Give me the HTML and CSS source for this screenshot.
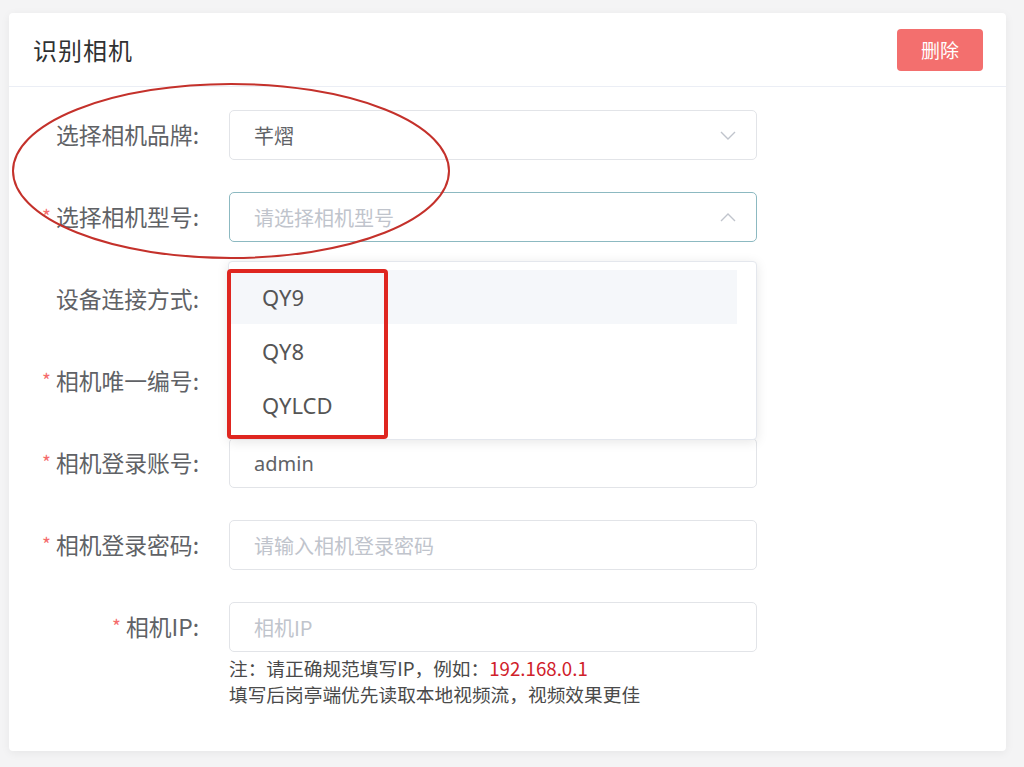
FILE: index.html
```html
<!DOCTYPE html>
<html lang="zh-CN">
<head>
<meta charset="utf-8">
<title>识别相机</title>
<link rel="stylesheet" href="styles.css">
</head>
<body>
<div class="page">
  <div class="card">
    <div class="card-header">
      <div class="title">识别相机</div>
      <button class="btn-danger">删除</button>
    </div>
    <div class="form">
      <div class="row">
        <label class="label">选择相机品牌:</label>
        <div class="input select"><span class="value">芊熠</span>
          <svg class="chev" viewBox="0 0 16 9" width="16" height="9"><path d="M1 1 L8 8 L15 1" fill="none" stroke="#c0c4cc" stroke-width="1.4"/></svg>
        </div>
      </div>
      <div class="row">
        <label class="label"><span class="req">*</span>选择相机型号:</label>
        <div class="input select focus"><span class="ph">请选择相机型号</span>
          <svg class="chev" viewBox="0 0 16 9" width="16" height="9"><path d="M1 8 L8 1 L15 8" fill="none" stroke="#c0c4cc" stroke-width="1.4"/></svg>
        </div>
      </div>
      <div class="row">
        <label class="label">设备连接方式:</label>
        <div class="input"></div>
      </div>
      <div class="row">
        <label class="label"><span class="req">*</span>相机唯一编号:</label>
        <div class="input"></div>
      </div>
      <div class="row">
        <label class="label"><span class="req">*</span>相机登录账号:</label>
        <div class="input"><span class="value">admin</span></div>
      </div>
      <div class="row">
        <label class="label"><span class="req">*</span>相机登录密码:</label>
        <div class="input"><span class="ph">请输入相机登录密码</span></div>
      </div>
      <div class="row">
        <label class="label"><span class="req">*</span>相机IP:</label>
        <div class="field">
          <div class="input"><span class="ph">相机IP</span></div>
          <div class="note">
            <div>注：请正确规范填写IP，例如：<span class="ip">192.168.0.1</span></div>
            <div>填写后岗亭端优先读取本地视频流，视频效果更佳</div>
          </div>
        </div>
      </div>
    </div>

    <div class="dropdown">
      <div class="opt hover">QY9</div>
      <div class="opt">QY8</div>
      <div class="opt">QYLCD</div>
    </div>

    <div class="mark-box"></div>
    <svg class="mark-ellipse" width="460" height="190" viewBox="0 0 460 190">
      <ellipse cx="222" cy="93" rx="218" ry="87" fill="none" stroke="#c4312b" stroke-width="2"/>
    </svg>
  </div>
</div>
</body>
</html>
```

FILE: styles.css
```css
html, body {
  margin: 0;
  padding: 0;
}
body {
  background: #f4f4f5;
  font-family: "Noto Sans", "Noto Sans CJK SC", sans-serif;
  color: #606266;
}
.page {
  padding: 13px 18px 16px 9px;
}
.card {
  position: relative;
  background: #fff;
  border-radius: 4px;
  box-shadow: 0 2px 10px rgba(0, 0, 0, 0.06);
  height: 738px;
}
.card-header {
  height: 73px;
  border-bottom: 1px solid #ebeef5;
  display: flex;
  align-items: center;
  justify-content: space-between;
  padding: 0 23px 0 24px;
}
.title {
  font-size: 24px;
  color: #303133;
  letter-spacing: 1px;
}
.btn-danger {
  width: 86px;
  height: 42px;
  border: none;
  border-radius: 4px;
  background: #f36f6e;
  color: #fff;
  font-family: inherit;
  font-size: 19px;
  padding: 0;
}
.form {
  padding-top: 23px;
  display: flex;
  flex-direction: column;
  gap: 32px;
}
.row {
  display: flex;
  align-items: flex-start;
}
.label {
  width: 190px;
  height: 50px;
  line-height: 50px;
  text-align: right;
  font-family: "Noto Sans CJK SC", sans-serif;
  font-size: 22.8px;
  color: #606266;
  margin-right: 30px;
  white-space: nowrap;
}
.req {
  color: #f56c6c;
  font-size: 19px;
  margin-right: 5px;
  position: relative;
  top: -2px;
}
.field {
  display: flex;
  flex-direction: column;
}
.input {
  box-sizing: border-box;
  width: 528px;
  height: 50px;
  border: 1px solid #e2e4e8;
  border-radius: 5px;
  padding-left: 24px;
  display: flex;
  align-items: center;
  font-size: 20px;
  background: #fff;
}
.select {
  position: relative;
}
.select .chev {
  position: absolute;
  right: 20px;
  top: 20px;
}
.focus {
  border-color: #8cb9c1;
}
.value {
  color: #606266;
}
.ph {
  color: #c0c4cc;
  font-family: "Noto Sans CJK SC", sans-serif;
}
.note {
  margin-top: 3px;
  font-family: "Noto Sans CJK SC", sans-serif;
  font-size: 18.7px;
  line-height: 26px;
  color: #4a4a4a;
}
.ip {
  color: #d0212a;
}
.dropdown {
  position: absolute;
  left: 219px;
  top: 248px;
  width: 529px;
  height: 179px;
  box-sizing: border-box;
  background: #fff;
  border: 1px solid #e4e7ed;
  border-radius: 4px;
  box-shadow: 0 2px 12px rgba(0, 0, 0, 0.1);
  padding: 8px 19px 0 0;
}
.opt {
  height: 54px;
  line-height: 54px;
  padding-left: 33px;
  font-size: 22px;
  color: #555;
}
.opt.hover {
  background: #f5f7fa;
}
.mark-box {
  position: absolute;
  left: 218px;
  top: 256px;
  width: 161px;
  height: 170px;
  box-sizing: border-box;
  border: 4px solid #df2620;
  border-radius: 4px;
}
.mark-ellipse {
  position: absolute;
  left: 0;
  top: 65px;
  pointer-events: none;
}
```
